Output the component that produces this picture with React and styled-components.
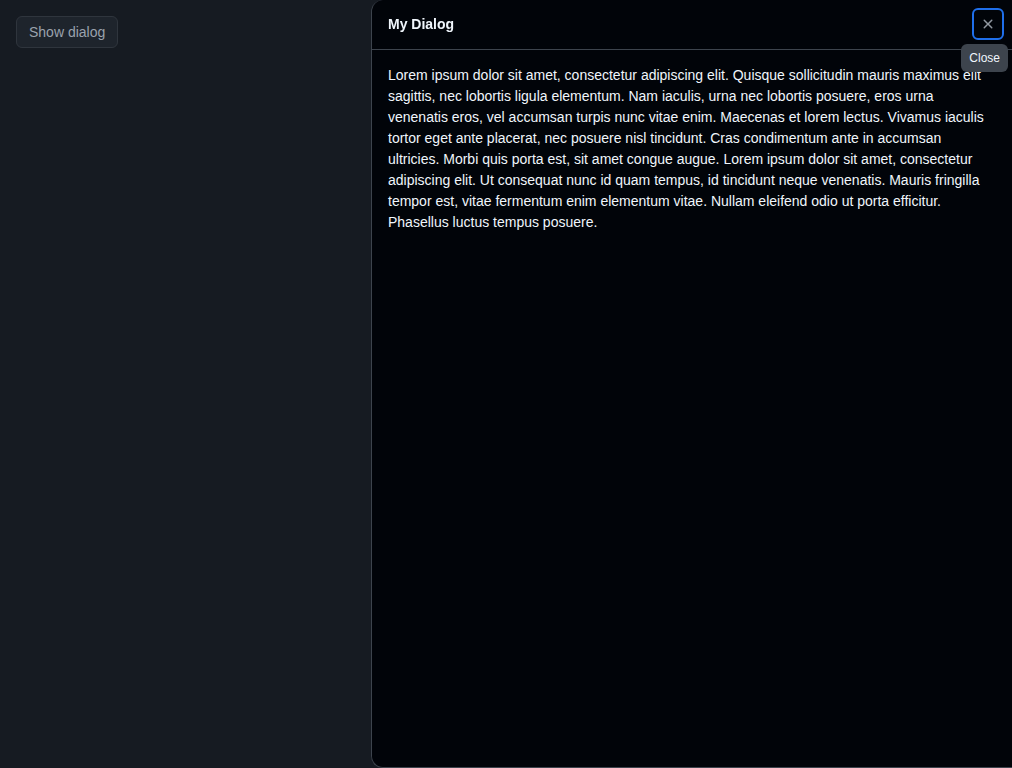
import React from "react";
import styled, { createGlobalStyle } from "styled-components";

const Global = createGlobalStyle`
  html, body { margin: 0; padding: 0; background: #161b22; height: 100%; }
  body { font-family: "Liberation Sans", Arial, sans-serif; color: #f0f6fc; overflow: hidden; }
  #root { min-height: 100vh; }
`;

const Page = styled.div`
  padding: 16px;
  min-height: 100vh;
  box-sizing: border-box;
  background: #161b22;
`;

const Button = styled.button`
  height: 32px;
  padding: 0 12px;
  font-family: "Liberation Sans", Arial, sans-serif;
  font-size: 14px;
  color: #9aa2ad;
  background: #1e242c;
  border: 1px solid #2f353d;
  border-radius: 6px;
  cursor: pointer;
`;

const Sheet = styled.div`
  position: fixed;
  top: 0;
  bottom: 0;
  right: 0;
  width: 641px;
  box-sizing: border-box;
  background: #010409;
  border: 1px solid #3d444d;
  border-top: none;
  border-right: none;
  border-radius: 12px 0 0 12px;
  display: flex;
  flex-direction: column;
`;

const Header = styled.div`
  height: 49px;
  display: flex;
  align-items: center;
  justify-content: space-between;
  padding: 0 8px 0 16px;
  border-bottom: 1px solid #3d444d;
  position: relative;
`;

const Title = styled.h1`
  margin: -1px 0 0;
  font-size: 14px;
  font-weight: 700;
  color: #f0f6fc;
`;

const CloseButton = styled.button`
  width: 32px;
  height: 32px;
  padding: 0;
  margin-top: -1px;
  display: flex;
  align-items: center;
  justify-content: center;
  background: transparent;
  border: 2px solid #1f6feb;
  border-radius: 6px;
  color: #9198a1;
  cursor: pointer;
`;

const Tooltip = styled.div`
  position: absolute;
  top: 44px;
  right: 4px;
  background: #3d444d;
  color: #f0f6fc;
  font-size: 12px;
  line-height: 16px;
  padding: 6px 8px;
  border-radius: 6px;
  z-index: 2;
`;

const Body = styled.div`
  padding: 15px 16px 16px;
  font-size: 14px;
  line-height: 21px;
  color: #f0f6fc;
`;

const XIcon = () => (
  <svg width="16" height="16" viewBox="0 0 16 16" fill="currentColor">
    <path d="M3.72 3.72a.75.75 0 0 1 1.06 0L8 6.94l3.22-3.22a.749.749 0 0 1 1.275.326.749.749 0 0 1-.215.734L9.06 8l3.22 3.22a.749.749 0 0 1-.326 1.275.749.749 0 0 1-.734-.215L8 9.06l-3.22 3.22a.751.751 0 0 1-1.042-.018.751.751 0 0 1-.018-1.042L6.94 8 3.72 4.780a.75.75 0 0 1 0-1.06Z" />
  </svg>
);

export default function App() {
  return (
    <>
      <Global />
      <Page>
        <Button>Show dialog</Button>
      </Page>
      <Sheet role="dialog">
        <Header>
          <Title>My Dialog</Title>
          <CloseButton aria-label="Close">
            <XIcon />
          </CloseButton>
          <Tooltip>Close</Tooltip>
        </Header>
        <Body>
          Lorem ipsum dolor sit amet, consectetur adipiscing elit. Quisque sollicitudin mauris maximus elit
          sagittis, nec lobortis ligula elementum. Nam iaculis, urna nec lobortis posuere, eros urna
          venenatis eros, vel accumsan turpis nunc vitae enim. Maecenas et lorem lectus. Vivamus iaculis
          tortor eget ante placerat, nec posuere nisl tincidunt. Cras condimentum ante in accumsan
          ultricies. Morbi quis porta est, sit amet congue augue. Lorem ipsum dolor sit amet, consectetur
          adipiscing elit. Ut consequat nunc id quam tempus, id tincidunt neque venenatis. Mauris fringilla
          tempor est, vitae fermentum enim elementum vitae. Nullam eleifend odio ut porta efficitur.
          Phasellus luctus tempus posuere.
        </Body>
      </Sheet>
    </>
  );
}
